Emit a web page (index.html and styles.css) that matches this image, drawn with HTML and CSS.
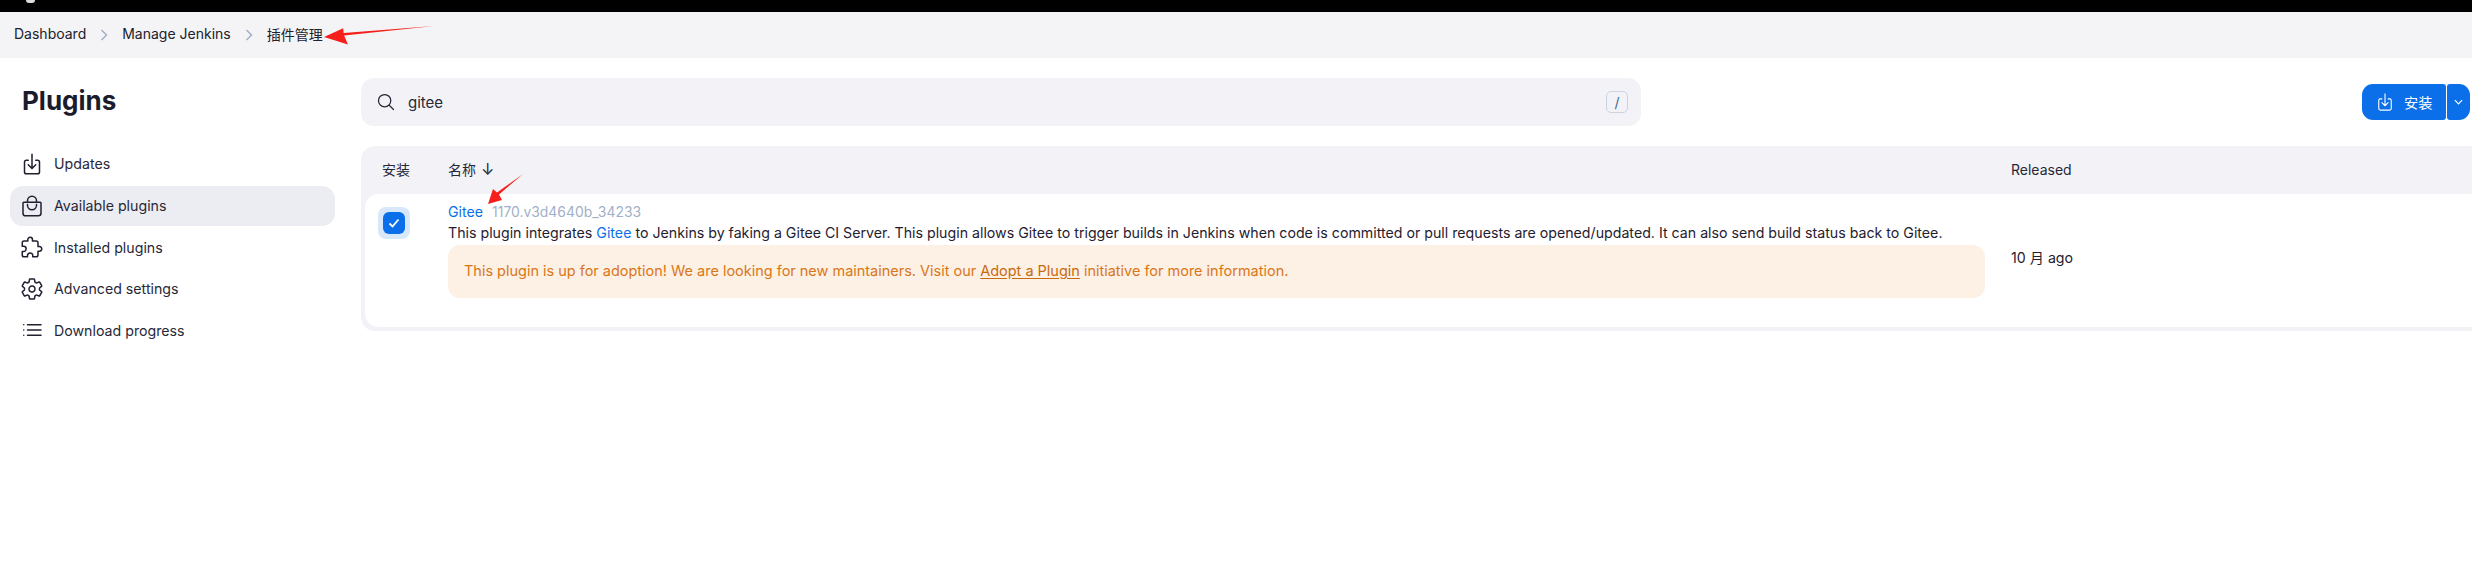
FILE: index.html
```html
<!DOCTYPE html>
<html lang="en">
<head>
<meta charset="utf-8">
<title>Plugins</title>
<link rel="stylesheet" href="styles.css">
</head>
<body>
<div class="topbar"><span class="top-mark"></span></div>
<nav class="crumbs">
  <span>Dashboard</span>
  <svg class="sep" viewBox="0 0 8 12"><path d="M1.500 1l5 5-5 5"/></svg>
  <span>Manage Jenkins</span>
  <svg class="sep" viewBox="0 0 8 12"><path d="M1.500 1l5 5-5 5"/></svg>
  <span>插件管理</span>
</nav>
<div class="page">
  <aside class="side">
    <h1 class="title">Plugins</h1>
    <ul class="menu">
      <li class="item"><svg class="ico" viewBox="0 0 512 512"><path d="M336 176h40a40 40 0 0140 40v208a40 40 0 01-40 40H136a40 40 0 01-40-40V216a40 40 0 0140-40h40M176 272l80 80 80-80M256 48v288"/></svg>Updates</li>
      <li class="item active"><svg class="ico" viewBox="0 0 512 512"><path d="M80 176a16 16 0 00-16 16v216c0 30.240 25.760 56 56 56h272c30.240 0 56-24.510 56-54.750V192a16 16 0 00-16-16zM160 176v-32a96 96 0 0196-96h0a96 96 0 0196 96v32M160 224v16a96 96 0 0096 96h0a96 96 0 0096-96v-16"/></svg>Available plugins</li>
      <li class="item"><svg class="ico" viewBox="0 0 512 512"><path d="M413.660 246.100H386a2 2 0 01-2-2v-77.240A38.860 38.860 0 00345.140 128H267.900a2 2 0 01-2-2V98.340c0-27.140-21.500-49.860-48.640-50.330a49.530 49.530 0 00-50.400 49.510V126a2 2 0 01-2 2H87.620A39.740 39.740 0 0048 167.620V238a2 2 0 002 2h26.910c29.370 0 53.680 25.480 54.090 54.850.42 29.870-23.510 57.150-53.290 57.150H50a2 2 0 00-2 2v70.380A39.740 39.740 0 0087.620 464H158a2 2 0 002-2v-20.930c0-30.280 24.750-56.350 55-57.060 30.100-.7 57 20.310 57 50.280V462a2 2 0 002 2h71.140A38.860 38.860 0 00384 425.140v-78a2 2 0 012-2h28.480c27.630 0 49.520-22.670 49.520-50.400s-23.200-48.640-50.340-48.640z"/></svg>Installed plugins</li>
      <li class="item"><svg class="ico" viewBox="0 0 512 512"><path d="M262.290 192.310a64 64 0 1057.400 57.400 64.130 64.130 0 00-57.400-57.400zM416.390 256a154.340 154.340 0 01-1.530 20.790l45.210 35.460a10.810 10.810 0 012.450 13.750l-42.770 74a10.810 10.810 0 01-13.140 4.590l-44.900-18.080a16.110 16.110 0 00-15.170 1.750A164.480 164.480 0 01325 400.800a15.940 15.940 0 00-8.820 12.140l-6.730 47.890a11.080 11.080 0 01-10.680 9.170h-85.540a11.110 11.110 0 01-10.690-8.870l-6.720-47.820a16.070 16.070 0 00-9-12.220 155.300 155.300 0 01-21.460-12.570 16 16 0 00-15.110-1.710l-44.890 18.070a10.810 10.810 0 01-13.140-4.580l-42.770-74a10.800 10.800 0 012.450-13.750l38.210-30a16.050 16.050 0 006-14.080c-.36-4.170-.58-8.330-.58-12.500s.21-8.270.58-12.350a16 16 0 00-6.070-13.940l-38.190-30A10.810 10.810 0 0149.480 186l42.770-74a10.810 10.810 0 0113.140-4.590l44.900 18.080a16.110 16.110 0 0015.170-1.750A164.480 164.480 0 01187 111.200a15.940 15.940 0 008.820-12.140l6.730-47.890A11.080 11.080 0 01213.230 42h85.540a11.110 11.110 0 0110.690 8.870l6.720 47.820a16.070 16.070 0 009 12.220 155.300 155.300 0 0121.460 12.570 16 16 0 0015.110 1.710l44.890-18.070a10.810 10.810 0 0113.140 4.580l42.770 74a10.800 10.800 0 01-2.450 13.750l-38.210 30a16.050 16.050 0 00-6.050 14.080c.33 4.140.55 8.300.55 12.470z"/></svg>Advanced settings</li>
      <li class="item"><svg class="ico" viewBox="0 0 512 512"><path d="M160 144h288M160 256h288M160 368h288"/><circle class="dot" cx="80" cy="144" r="16"/><circle class="dot" cx="80" cy="256" r="16"/><circle class="dot" cx="80" cy="368" r="16"/></svg>Download progress</li>
    </ul>
  </aside>
  <main class="content">
    <div class="toolbar">
      <div class="search">
        <svg class="search-ico" viewBox="0 0 512 512"><path d="M221.090 64a157.090 157.090 0 10157.090 157.090A157.100 157.100 0 00221.090 64zM338.290 338.290L448 448"/></svg>
        <span class="query">gitee</span>
        <kbd class="key">/</kbd>
      </div>
      <div class="actions">
        <button class="btn main-btn"><svg class="btn-ico" viewBox="0 0 512 512"><path d="M336 176h40a40 40 0 0140 40v208a40 40 0 01-40 40H136a40 40 0 01-40-40V216a40 40 0 0140-40h40M176 272l80 80 80-80M256 48v288"/></svg>安装</button>
        <button class="btn drop-btn"><svg class="drop-ico" viewBox="0 0 10 6"><path d="M1 1l4 4 4-4"/></svg></button>
      </div>
    </div>
    <div class="table">
      <div class="thead">
        <span class="c-install">安装</span>
        <span class="c-name">名称<span class="arrow">↓</span></span>
        <span class="c-rel">Released</span>
      </div>
      <div class="row">
        <div class="c-install cell-check"><span class="check"><svg viewBox="0 0 12 10"><path d="M1.500 5.500l3 3 6-7"/></svg></span></div>
        <div class="c-name body">
          <div class="name-line"><a class="link">Gitee</a><span class="ver">1170.v3d4640b_34233</span></div>
          <p class="desc">This plugin integrates <a class="link">Gitee</a> to Jenkins by faking a Gitee CI Server. This plugin allows Gitee to trigger builds in Jenkins when code is committed or pull requests are opened/updated. It can also send build status back to Gitee.</p>
          <div class="warn"><span>This plugin is up for adoption! We are looking for new maintainers. Visit our <u class="warn-link">Adopt a Plugin</u> initiative for more information.</span></div>
        </div>
        <div class="c-rel cell-rel">10 月 ago</div>
      </div>
    </div>
  </main>
</div>
<svg class="note note-a" viewBox="0 0 120 20"><path d="M115 0.500L21 10.500 25 20 0 12 20 3 20.500 8z"/></svg>
<svg class="note note-b" viewBox="0 0 36 30"><path d="M35 0L11 20.500 14 26 0 30 5 15 9 18.500z"/></svg>
</body>
</html>
```
FILE: styles.css
```css
* { box-sizing: border-box; }
html, body { margin: 0; height: 579px; overflow: hidden; }
body {
  position: relative;
  background: #fff;
  color: #1f2030;
  font-family: Inter, "Noto Sans CJK SC", sans-serif;
  font-size: 14.19px;
}
.topbar { height: 12px; background: #000; }
.top-mark { display: block; width: 9px; height: 3px; margin-left: 26px; background: #ddd; border-radius: 0 0 4px 4px; }
.crumbs {
  display: flex; align-items: center;
  height: 46px; padding: 0 0 3px 14px;
  background: #f4f4f7; color: #20212b; font-size: 14px;
}
.sep { width: 8px; height: 12px; margin: 2px 14px 0 14px; fill: none; stroke: #a3b1c6; stroke-width: 1.500; }
.page { display: flex; }
.side { width: 361px; flex: none; padding-left: 10px; }
.title { margin: 0; padding: 26px 0 0 12px; height: 86px; font-size: 26px; line-height: 34px; font-weight: 700; color: #1b1c2b; }
.menu { list-style: none; margin: 0; padding: 0; width: 325px; }
.item { display: flex; align-items: center; height: 41.500px; padding: 0 0 2px 10px; color: #272838; }
.item.active { background: #ecedf3; border-radius: 13px; height: 40px; padding-bottom: 0; margin: 0 0 2px; }
.ico { width: 24px; height: 24px; margin-right: 10px; fill: none; stroke: #1f2030; stroke-width: 32; stroke-linecap: round; stroke-linejoin: round; flex: none; }
.ico .dot { fill: #1f2030; stroke: none; }
.content { flex: 1; min-width: 0; }
.toolbar { display: flex; align-items: center; justify-content: space-between; margin-top: 20px; padding-right: 2px; }
.search {
  display: flex; align-items: center;
  width: 1280px; height: 48px; padding: 0 13px 0 15px;
  background: #f3f3f7; border-radius: 13px;
}
.search-ico { width: 20px; height: 20px; fill: none; stroke: #272838; stroke-width: 32; stroke-linecap: round; }
.query { flex: 1; margin-left: 12px; font-size: 15px; color: #272838; }
.key {
  display: flex; align-items: center; justify-content: center;
  width: 22px; height: 22px;
  border: 1px solid #c9d3e2; border-radius: 5px; color: #3f6597;
  font-family: Inter, sans-serif; font-size: 14px;
}
.actions { display: flex; gap: 1px; }
.btn { display: flex; align-items: center; height: 36px; border: 0; background: #0a6fe8; color: #fff; font: inherit; padding: 0; }
.main-btn { width: 84px; padding-left: 13px; border-radius: 11px 3px 3px 11px; }
.btn-ico { width: 20px; height: 20px; margin-right: 9px; fill: none; stroke: #fff; stroke-width: 28; stroke-linecap: round; stroke-linejoin: round; }
.drop-btn { width: 23px; justify-content: center; border-radius: 3px 11px 11px 3px; }
.drop-ico { width: 9px; height: 6px; fill: none; stroke: #fff; stroke-width: 1.300; }
.table { margin-top: 20px; background: #f3f3f7; border-radius: 14px 0 0 14px; padding: 0 0 4px 4px; height: 185px; }
.thead { display: flex; align-items: center; height: 48px; padding-bottom: 2px; font-size: 14px; color: #272838; }
.c-install { width: 83px; flex: none; padding-left: 17px; }
.c-name { width: 1563px; flex: none; }
.c-rel { flex: 1; }
.arrow { margin-left: 5px; font-size: 16px; line-height: 14px; }
.row { display: flex; height: 133px; background: #fff; border-radius: 14px 0 0 14px; }
.cell-check { padding: 13px 0 0 13px; }
.check { display: flex; width: 32px; height: 32px; background: #d8e8fb; border-radius: 8px; align-items: center; justify-content: center; }
.check svg { width: 22px; height: 22px; padding: 6px 5px; background: #0a6fe8; border-radius: 6px; fill: none; stroke: #fff; stroke-width: 1.800; }
.body { padding-top: 7px; }
.name-line { height: 21px; line-height: 21px; white-space: nowrap; }
.link { color: #0a6fe8; }
.ver { margin-left: 9px; color: #9fb0c7; font-size: 13.9px; }
.desc { margin: 0; height: 23px; line-height: 21px; white-space: nowrap; color: #1f2030; }
.warn {
  display: flex; align-items: center;
  width: 1537px; height: 53px; padding: 0 16px 2px;
  background: #fdf0e5; border-radius: 12px; color: #d97717; font-size: 14.47px;
}
.warn-link { text-underline-offset: 2px; color: #c96a0c; }
.cell-rel { padding-top: 53px; }
.note { position: absolute; fill: #f5201c; }
.note-a { left: 324px; top: 25px; width: 115px; height: 20px; }
.note-b { left: 488px; top: 174px; width: 36px; height: 30px; }
```
